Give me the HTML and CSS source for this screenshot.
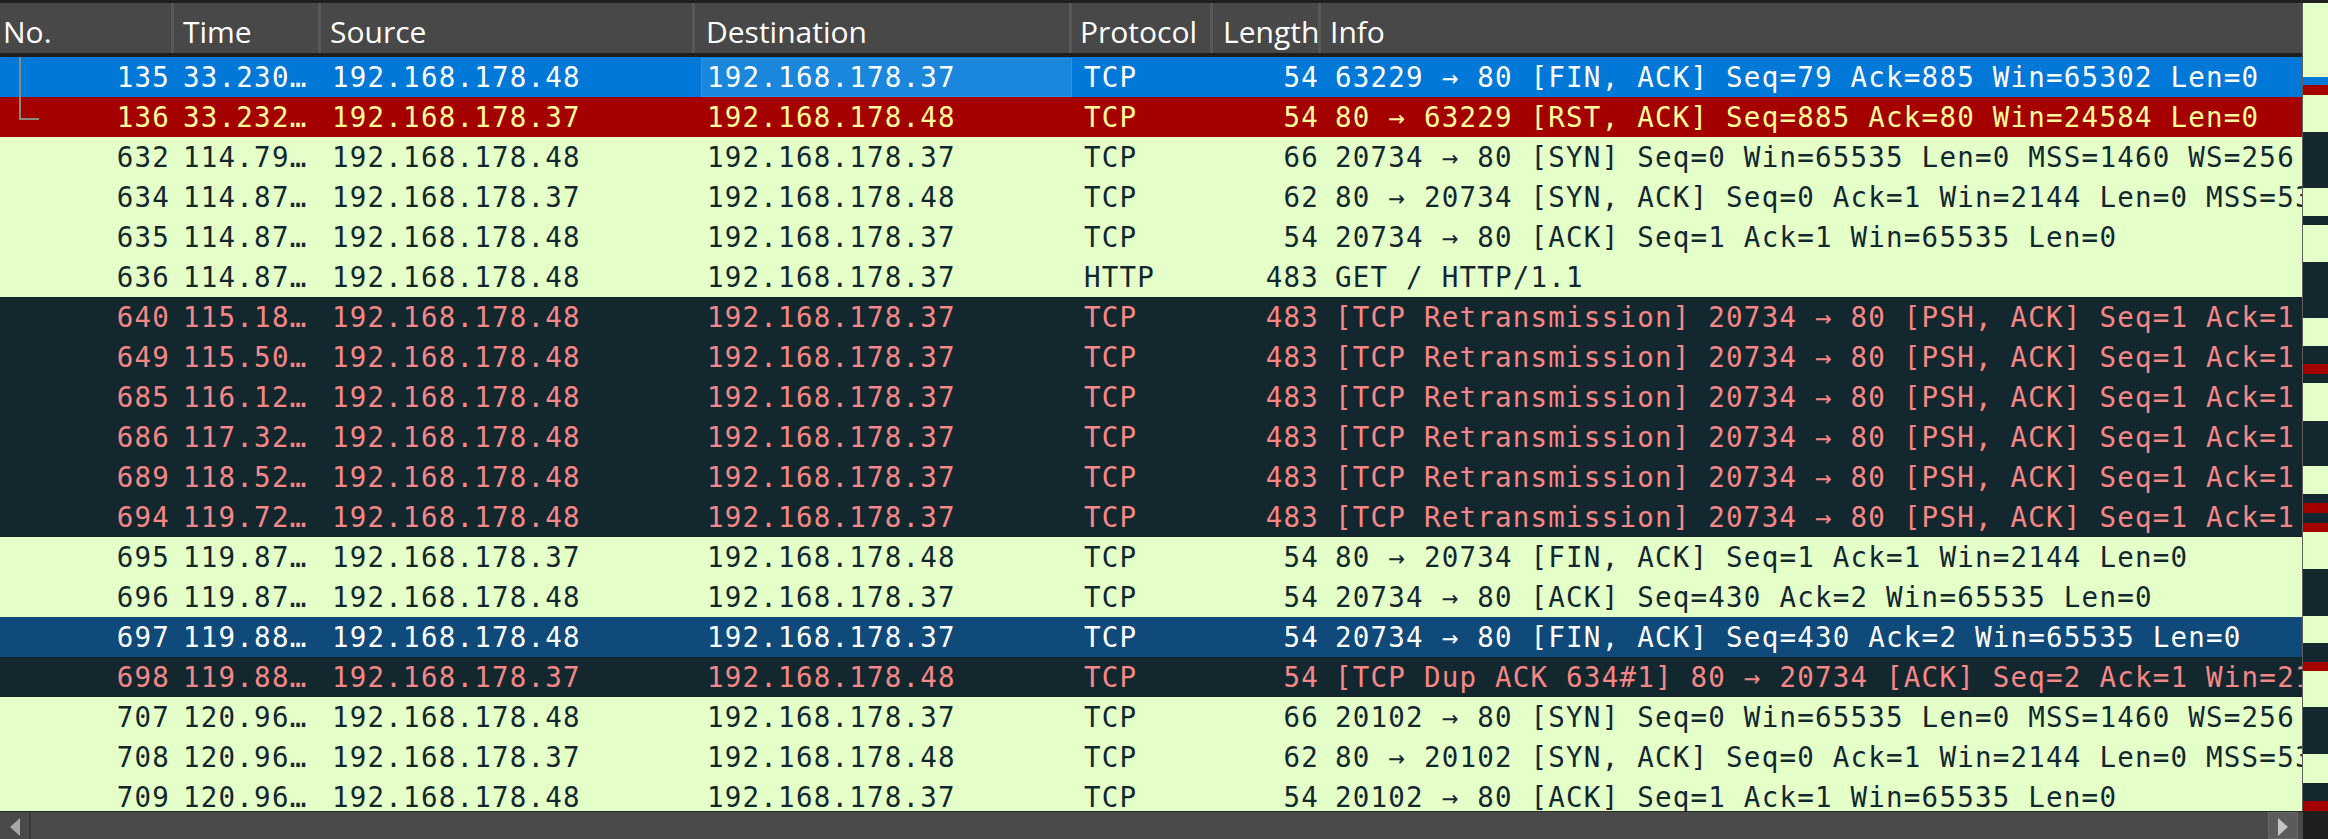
FILE: index.html
```html
<!DOCTYPE html>
<html>
<head>
<meta charset="utf-8">
<title>Packet list</title>
<link rel="stylesheet" href="styles.css">
</head>
<body>
<div class="main">
  <div class="table">
    <div class="head">
      <div class="h-no">No.</div>
      <div>Time</div>
      <div>Source</div>
      <div class="h-dst">Destination</div>
      <div class="h-proto">Protocol</div>
      <div class="h-len">Length</div>
      <div class="h-info">Info</div>
    </div>
    <div class="rows">
      <div class="row sel"><span class="no">135<i class="tree"></i></span><span class="time">33.230…</span><span class="src">192.168.178.48</span><span class="dst focus">192.168.178.37</span><span class="proto">TCP</span><span class="len">54</span><span class="info">63229 → 80 [FIN, ACK] Seq=79 Ack=885 Win=65302 Len=0</span></div>
      <div class="row rst"><span class="no">136</span><span class="time">33.232…</span><span class="src">192.168.178.37</span><span class="dst">192.168.178.48</span><span class="proto">TCP</span><span class="len">54</span><span class="info">80 → 63229 [RST, ACK] Seq=885 Ack=80 Win=24584 Len=0</span></div>
      <div class="row ok"><span class="no">632</span><span class="time">114.79…</span><span class="src">192.168.178.48</span><span class="dst">192.168.178.37</span><span class="proto">TCP</span><span class="len">66</span><span class="info">20734 → 80 [SYN] Seq=0 Win=65535 Len=0 MSS=1460 WS=256 SACK_PERM=1</span></div>
      <div class="row ok"><span class="no">634</span><span class="time">114.87…</span><span class="src">192.168.178.37</span><span class="dst">192.168.178.48</span><span class="proto">TCP</span><span class="len">62</span><span class="info">80 → 20734 [SYN, ACK] Seq=0 Ack=1 Win=2144 Len=0 MSS=536</span></div>
      <div class="row ok"><span class="no">635</span><span class="time">114.87…</span><span class="src">192.168.178.48</span><span class="dst">192.168.178.37</span><span class="proto">TCP</span><span class="len">54</span><span class="info">20734 → 80 [ACK] Seq=1 Ack=1 Win=65535 Len=0</span></div>
      <div class="row ok"><span class="no">636</span><span class="time">114.87…</span><span class="src">192.168.178.48</span><span class="dst">192.168.178.37</span><span class="proto">HTTP</span><span class="len">483</span><span class="info">GET / HTTP/1.1</span></div>
      <div class="row bad"><span class="no">640</span><span class="time">115.18…</span><span class="src">192.168.178.48</span><span class="dst">192.168.178.37</span><span class="proto">TCP</span><span class="len">483</span><span class="info">[TCP Retransmission] 20734 → 80 [PSH, ACK] Seq=1 Ack=1 Win=65535 Len=429</span></div>
      <div class="row bad"><span class="no">649</span><span class="time">115.50…</span><span class="src">192.168.178.48</span><span class="dst">192.168.178.37</span><span class="proto">TCP</span><span class="len">483</span><span class="info">[TCP Retransmission] 20734 → 80 [PSH, ACK] Seq=1 Ack=1 Win=65535 Len=429</span></div>
      <div class="row bad"><span class="no">685</span><span class="time">116.12…</span><span class="src">192.168.178.48</span><span class="dst">192.168.178.37</span><span class="proto">TCP</span><span class="len">483</span><span class="info">[TCP Retransmission] 20734 → 80 [PSH, ACK] Seq=1 Ack=1 Win=65535 Len=429</span></div>
      <div class="row bad"><span class="no">686</span><span class="time">117.32…</span><span class="src">192.168.178.48</span><span class="dst">192.168.178.37</span><span class="proto">TCP</span><span class="len">483</span><span class="info">[TCP Retransmission] 20734 → 80 [PSH, ACK] Seq=1 Ack=1 Win=65535 Len=429</span></div>
      <div class="row bad"><span class="no">689</span><span class="time">118.52…</span><span class="src">192.168.178.48</span><span class="dst">192.168.178.37</span><span class="proto">TCP</span><span class="len">483</span><span class="info">[TCP Retransmission] 20734 → 80 [PSH, ACK] Seq=1 Ack=1 Win=65535 Len=429</span></div>
      <div class="row bad"><span class="no">694</span><span class="time">119.72…</span><span class="src">192.168.178.48</span><span class="dst">192.168.178.37</span><span class="proto">TCP</span><span class="len">483</span><span class="info">[TCP Retransmission] 20734 → 80 [PSH, ACK] Seq=1 Ack=1 Win=65535 Len=429</span></div>
      <div class="row ok"><span class="no">695</span><span class="time">119.87…</span><span class="src">192.168.178.37</span><span class="dst">192.168.178.48</span><span class="proto">TCP</span><span class="len">54</span><span class="info">80 → 20734 [FIN, ACK] Seq=1 Ack=1 Win=2144 Len=0</span></div>
      <div class="row ok"><span class="no">696</span><span class="time">119.87…</span><span class="src">192.168.178.48</span><span class="dst">192.168.178.37</span><span class="proto">TCP</span><span class="len">54</span><span class="info">20734 → 80 [ACK] Seq=430 Ack=2 Win=65535 Len=0</span></div>
      <div class="row hl"><span class="no">697</span><span class="time">119.88…</span><span class="src">192.168.178.48</span><span class="dst">192.168.178.37</span><span class="proto">TCP</span><span class="len">54</span><span class="info">20734 → 80 [FIN, ACK] Seq=430 Ack=2 Win=65535 Len=0</span></div>
      <div class="row bad"><span class="no">698</span><span class="time">119.88…</span><span class="src">192.168.178.37</span><span class="dst">192.168.178.48</span><span class="proto">TCP</span><span class="len">54</span><span class="info">[TCP Dup ACK 634#1] 80 → 20734 [ACK] Seq=2 Ack=1 Win=2144 Len=0</span></div>
      <div class="row ok"><span class="no">707</span><span class="time">120.96…</span><span class="src">192.168.178.48</span><span class="dst">192.168.178.37</span><span class="proto">TCP</span><span class="len">66</span><span class="info">20102 → 80 [SYN] Seq=0 Win=65535 Len=0 MSS=1460 WS=256 SACK_PERM=1</span></div>
      <div class="row ok"><span class="no">708</span><span class="time">120.96…</span><span class="src">192.168.178.37</span><span class="dst">192.168.178.48</span><span class="proto">TCP</span><span class="len">62</span><span class="info">80 → 20102 [SYN, ACK] Seq=0 Ack=1 Win=2144 Len=0 MSS=536</span></div>
      <div class="row ok"><span class="no">709</span><span class="time">120.96…</span><span class="src">192.168.178.48</span><span class="dst">192.168.178.37</span><span class="proto">TCP</span><span class="len">54</span><span class="info">20102 → 80 [ACK] Seq=1 Ack=1 Win=65535 Len=0</span></div>
    </div>
  </div>
  <div class="divider"></div>
  <div class="minimap">
    <div class="m-ok" style="height:74px"></div>
    <div class="m-sel" style="height:8px"></div>
    <div class="m-rst" style="height:10px"></div>
    <div class="m-ok" style="height:37px"></div>
    <div class="m-bad" style="height:56px"></div>
    <div class="m-ok" style="height:28px"></div>
    <div class="m-bad" style="height:9px"></div>
    <div class="m-ok" style="height:37px"></div>
    <div class="m-bad" style="height:56px"></div>
    <div class="m-ok" style="height:28px"></div>
    <div class="m-bad" style="height:18px"></div>
    <div class="m-rst" style="height:10px"></div>
    <div class="m-bad" style="height:9px"></div>
    <div class="m-ok" style="height:38px"></div>
    <div class="m-bad" style="height:45px"></div>
    <div class="m-ok" style="height:28px"></div>
    <div class="m-bad" style="height:9px"></div>
    <div class="m-rst" style="height:10px"></div>
    <div class="m-bad" style="height:10px"></div>
    <div class="m-rst" style="height:9px"></div>
    <div class="m-ok" style="height:37px"></div>
    <div class="m-bad" style="height:47px"></div>
    <div class="m-ok" style="height:27px"></div>
    <div class="m-bad" style="height:19px"></div>
    <div class="m-rst" style="height:9px"></div>
    <div class="m-ok" style="height:36px"></div>
    <div class="m-bad" style="height:47px"></div>
    <div class="m-ok" style="height:29px"></div>
    <div class="m-bad" style="height:18px"></div>
    <div class="m-rst" style="height:10px"></div>
  </div>
</div>
<div class="hscroll">
  <div class="hbar">
    <div class="sbtn left"><svg width="10" height="18" viewBox="0 0 10 18"><polygon points="10,0 10,18 0,9" fill="#a9a9a9"/></svg></div>
    <div class="track"></div>
    <div class="sbtn right"><svg width="10" height="18" viewBox="0 0 10 18"><polygon points="0,0 0,18 10,9" fill="#c4c4c4"/></svg></div>
  </div>
  <div class="corner"></div>
</div>
</body>
</html>
```

FILE: styles.css
```css
* { box-sizing: border-box; }
html, body { margin: 0; padding: 0; }
body {
  width: 2328px;
  height: 839px;
  overflow: hidden;
  background: #1f1f1f;
  padding-top: 3px;
}
.main { display: flex; height: 808px; }
.table {
  width: 2302px;
  display: flex;
  flex-direction: column;
  overflow: hidden;
}
.divider { width: 1px; background: #5e5e5e; }
.minimap { width: 25px; display: flex; flex-direction: column; overflow: hidden; }
.minimap > div { flex: none; }
.m-ok { background: #e4ffc7; }
.m-bad { background: #12272e; }
.m-rst { background: #a40000; }
.m-sel { background: #0078d7; }

.head, .row {
  display: grid;
  grid-template-columns: 174px 147px 374px 377px 141px 108px 1fr;
}
.head {
  flex: none;
  height: 54px;
  background: #484848;
  border-bottom: 4px solid #1f1f1f;
  font-family: "Open Sans", "Noto Sans", sans-serif;
  font-size: 30px;
  color: #ffffff;
}
.head > div {
  padding: 8px 0 0 9px;
  line-height: 41px;
  border-right: 3px solid #585858;
  white-space: nowrap;
  overflow: hidden;
}
.head > .h-no { padding-left: 3px; }
.head > .h-dst { padding-left: 11px; }
.head > .h-proto { padding-left: 8px; }
.head > .h-len { padding-left: 10px; }
.head > .h-info { border-right: 0; padding-left: 9px; }

.rows {
  flex: 1;
  overflow: hidden;
  font-family: "DejaVu Sans Mono", monospace;
  font-size: 27.5px;
  letter-spacing: 1.22px;
}
.row { height: 40px; line-height: 40px; }
.row > span { white-space: nowrap; }
.row > .info { overflow: hidden; }
.no { text-align: right; padding-right: 4px; position: relative; }
.time { padding-left: 9px; }
.src { padding-left: 11px; }
.dst { padding-left: 12px; }
.proto { padding-left: 12px; }
.len { text-align: right; padding-right: 2px; }
.info { padding-left: 14px; }

.ok { background: #e4ffc7; color: #12272e; }
.bad { background: #12272e; color: #f78787; }
.rst { background: #a40000; color: #fffc9c; }
.sel { background: #0078d7; color: #ffffff; }
.hl { background: #0f4a7a; color: #ffffff; }

.dst.focus {
  border-left: 6px solid transparent;
  border-top: 1px solid transparent;
  padding-left: 6px;
  line-height: 38px;
  background: #1a87dc;
  background-clip: padding-box;
  box-shadow: inset 0 0 0 1px #2f93e2;
}

.tree {
  position: absolute;
  left: 19px;
  top: 0;
  width: 20px;
  height: 63px;
  border-left: 2px solid #8b8b7b;
  border-bottom: 2px solid #8b8b7b;
}

.hscroll { display: flex; height: 28px; }
.hbar {
  width: 2303px;
  display: flex;
  background: #4a4a4a;
  border-top: 1px solid #2a2a2a;
}
.sbtn {
  flex: none;
  display: flex;
  align-items: center;
  justify-content: center;
}
.sbtn.left { width: 31px; border-right: 2px solid #3a3a3a; padding-top: 2px; }
.sbtn.right {
  width: 30px;
  margin-right: 5px;
  background: #5b5b5b;
  border: 1px solid #676767;
  padding-top: 2px;
}
.track { flex: 1; }
.corner { width: 25px; background: #1f1f1f; }
```
